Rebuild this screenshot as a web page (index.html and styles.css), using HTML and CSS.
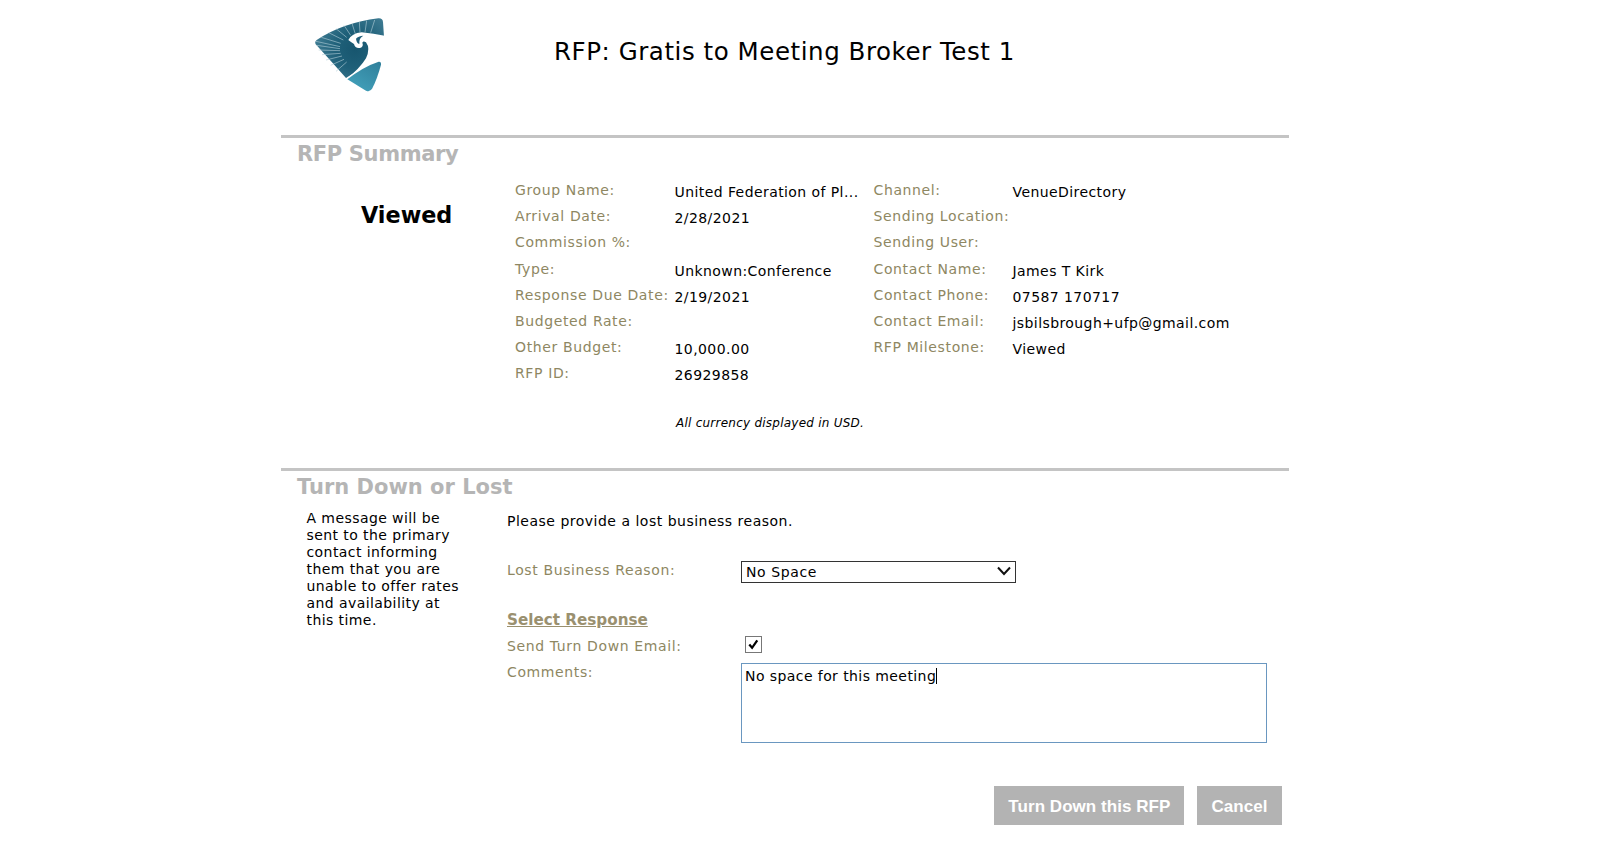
FILE: index.html
```html
<!DOCTYPE html>
<html lang="en">
<head>
<meta charset="utf-8">
<title>RFP: Gratis to Meeting Broker Test 1</title>
<link rel="stylesheet" href="styles.css">
</head>
<body>
<div class="page">
  <header class="masthead">
    <svg class="logo" viewBox="90 45 240 240" aria-hidden="true">
      <defs>
        <radialGradient id="dark" gradientUnits="userSpaceOnUse" cx="225" cy="150" r="125">
          <stop offset="0" stop-color="#17566f"/>
          <stop offset=".45" stop-color="#1f6079"/>
          <stop offset="1" stop-color="#3f7c93"/>
        </radialGradient>
        <linearGradient id="teal" x1="1" y1="0" x2="0.3" y2="1">
          <stop offset="0" stop-color="#2f7f9a"/>
          <stop offset="1" stop-color="#42a0ba"/>
        </linearGradient>
      </defs>
      <path fill="url(#dark)" d="M110 120 Q190 68 295 55 Q308 54 309 66 L312 110 L312 160 L198 234 Q150 180 107 133 Q103 125 110 120Z"/>
      <g stroke="#b4d0da" stroke-width="3" opacity=".6">
        <path d="M180 140 L108 124M180 146 L110 136M180 152 L116 150M182 160 L126 164M186 168 L138 180M192 178 L152 196M200 186 L168 214M182 130 L124 112M190 120 L146 98M200 112 L168 86M212 106 L192 76M226 102 L216 70M240 97 L238 66M255 97 L260 62M272 98 L284 60"/>
      </g>
      <path fill="#fff" d="M205 120 Q215 100 245 97 Q280 100 318 108 L318 184 L300 182 Q250 198 198 238 Q240 205 258 175 Q272 145 258 127 Q250 121 247 128 Q252 140 240 144 Q225 146 222 132 Q215 128 205 120Z"/>
      <path fill="#1f5f7a" d="M228 116 Q235 108 250 107 Q236 114 238 132 Q230 130 228 116Z"/>
      <path fill="url(#teal)" d="M202 238 Q250 200 296 185 Q304 184 303 194 Q292 235 277 265 Q270 278 258 272 Z"/>
    </svg>
    <h1 class="title">RFP: Gratis to Meeting Broker Test 1</h1>
  </header>

  <section class="section summary">
    <h2 class="section-title">RFP Summary</h2>
    <div class="summary-body">
      <div class="status">Viewed</div>
      <div class="details">
        <dl class="fields">
          <dt>Group Name:</dt><dd>United Federation of Pl...</dd>
          <dt>Channel:</dt><dd>VenueDirectory</dd>
          <dt>Arrival Date:</dt><dd>2/28/2021</dd>
          <dt>Sending Location:</dt><dd></dd>
          <dt>Commission %:</dt><dd></dd>
          <dt>Sending User:</dt><dd></dd>
          <dt>Type:</dt><dd>Unknown:Conference</dd>
          <dt>Contact Name:</dt><dd>James T Kirk</dd>
          <dt>Response Due Date:</dt><dd>2/19/2021</dd>
          <dt>Contact Phone:</dt><dd>07587 170717</dd>
          <dt>Budgeted Rate:</dt><dd></dd>
          <dt>Contact Email:</dt><dd>jsbilsbrough+ufp@gmail.com</dd>
          <dt>Other Budget:</dt><dd>10,000.00</dd>
          <dt>RFP Milestone:</dt><dd>Viewed</dd>
          <dt>RFP ID:</dt><dd>26929858</dd>
        </dl>
        <p class="currency-note">All currency displayed in USD.</p>
      </div>
    </div>
  </section>

  <section class="section turn-down">
    <h2 class="section-title">Turn Down or Lost</h2>
    <div class="turn-body">
      <p class="help">A message will be sent to the primary contact informing them that you are unable to offer rates and availability at this time.</p>
      <form class="form">
        <p class="prompt">Please provide a lost business reason.</p>
        <div class="row reason-row">
          <label class="label" for="reason">Lost Business Reason:</label>
          <span class="select-wrap">
            <select class="select" id="reason"><option>No Space</option></select>
            <svg class="chevron" viewBox="0 0 14 10" aria-hidden="true"><path d="M1 1.5 L7 8 L13 1.5" fill="none" stroke="#111" stroke-width="2"/></svg>
          </span>
        </div>
        <a class="select-response" href="#">Select Response</a>
        <div class="row email-row">
          <span class="label">Send Turn Down Email:</span>
          <span class="checkbox"><svg viewBox="0 0 16 16" aria-hidden="true"><path d="M3.5 8 L6.5 11.5 L12 3.5" fill="none" stroke="#000" stroke-width="2.4"/></svg></span>
        </div>
        <div class="row comments-row">
          <span class="label">Comments:</span>
          <div class="comments" role="textbox">No space for this meeting<span class="caret"></span></div>
        </div>
        <div class="actions">
          <button class="btn" type="button">Turn Down this RFP</button>
          <button class="btn" type="button">Cancel</button>
        </div>
      </form>
    </div>
  </section>
</div>
</body>
</html>
```

FILE: styles.css
```css
* { box-sizing: border-box; }
html, body { margin: 0; padding: 0; background: #fff; }
body {
  font-family: "DejaVu Sans", Verdana, sans-serif;
  font-size: 14px;
  letter-spacing: 0.42px;
  color: #000;
  height: 853px;
  overflow: hidden;
}
.page { width: 1008px; margin-left: 281px; }

.masthead { height: 135px; display: flex; align-items: flex-start; }
.logo { width: 80px; height: 80px; margin: 15px 0 0 29px; flex: none; }
.title {
  margin: 36px 0 0 164px;
  font-size: 24.5px;
  line-height: 32px;
  letter-spacing: 0.55px;
  font-weight: 400;
}

.section { border-top: 3px solid #c4c4c4; }
.section-title {
  margin: 0 0 0 16px;
  padding-top: 3px;
  font-size: 21px;
  line-height: 27px;
  letter-spacing: 0;
  font-weight: 700;
  color: #b5b5b5;
}
.summary .section-title { letter-spacing: -0.35px; }

.summary { height: 333px; }
.summary-body { display: flex; padding-top: 12px; }
.status {
  width: 234px;
  padding: 21px 0 0 80px;
  font-size: 22.3px;
  line-height: 28px;
  letter-spacing: 0;
  font-weight: 700;
}
.details { flex: 1; }
.fields {
  margin: 0;
  display: grid;
  grid-template-columns: 159.5px 199px 139px 1fr;
  grid-auto-rows: 26.2px;
}
.fields dt { color: #8e8762; line-height: 20px; white-space: nowrap; letter-spacing: 0.62px; }
.fields dd { margin: 0; padding-top: 2px; line-height: 20px; white-space: nowrap; }
.currency-note {
  margin: 25.5px 0 0 161px;
  font-size: 12px;
  line-height: 16px;
  letter-spacing: 0.24px;
  font-style: italic;
}

.turn-body { display: flex; }
.help {
  width: 160px;
  margin: 8.5px 0 0 25.5px;
  line-height: 17px;
}
.form { margin-left: 40.5px; width: 780px; }
.prompt { margin: 10px 0 0; line-height: 20px; letter-spacing: 0.5px; }
.row { display: flex; }
.label { width: 234px; flex: none; color: #8e8762; line-height: 20px; letter-spacing: 0.62px; }
.reason-row { margin-top: 29px; }
.select-wrap { position: relative; display: block; width: 275px; height: 22px; margin-top: 1px; }
.select {
  display: block;
  width: 100%;
  height: 22px;
  padding: 0 0 0 4px;
  font: inherit;
  letter-spacing: 0.6px;
  color: #000;
  background: #fff;
  border: 1px solid #333;
  border-radius: 0;
  appearance: none;
}
.chevron { position: absolute; right: 5px; top: 5px; width: 14px; height: 10px; }
.select-response {
  display: block;
  margin-top: 26px;
  font-size: 15.2px;
  line-height: 22px;
  letter-spacing: 0;
  font-weight: 700;
  color: #9a906f;
}
.email-row { margin-top: 5px; height: 26px; }
.checkbox {
  width: 17px;
  height: 17px;
  margin: 0 0 0 4px;
  border: 1px solid #777;
  background: #fff;
}
.checkbox svg { display: block; width: 15px; height: 15px; }
.comments-row { margin-top: 0; }
.comments {
  width: 526px;
  height: 80px;
  margin-top: 1px;
  padding: 3px 3px;
  border: 1px solid #6a97c0;
  line-height: 18px;
}
.caret { display: inline-block; width: 1px; height: 16px; background: #000; vertical-align: -3px; }
.actions { display: flex; justify-content: flex-end; gap: 13px; margin-top: 43px; padding-right: 5.5px; }
.btn {
  height: 39px;
  padding: 2px 14px 0;
  border: 0;
  background: #b3b3b3;
  color: #fff;
  font-family: "Liberation Sans", Arial, sans-serif;
  font-size: 17px;
  letter-spacing: 0.05px;
  font-weight: 700;
}
```
